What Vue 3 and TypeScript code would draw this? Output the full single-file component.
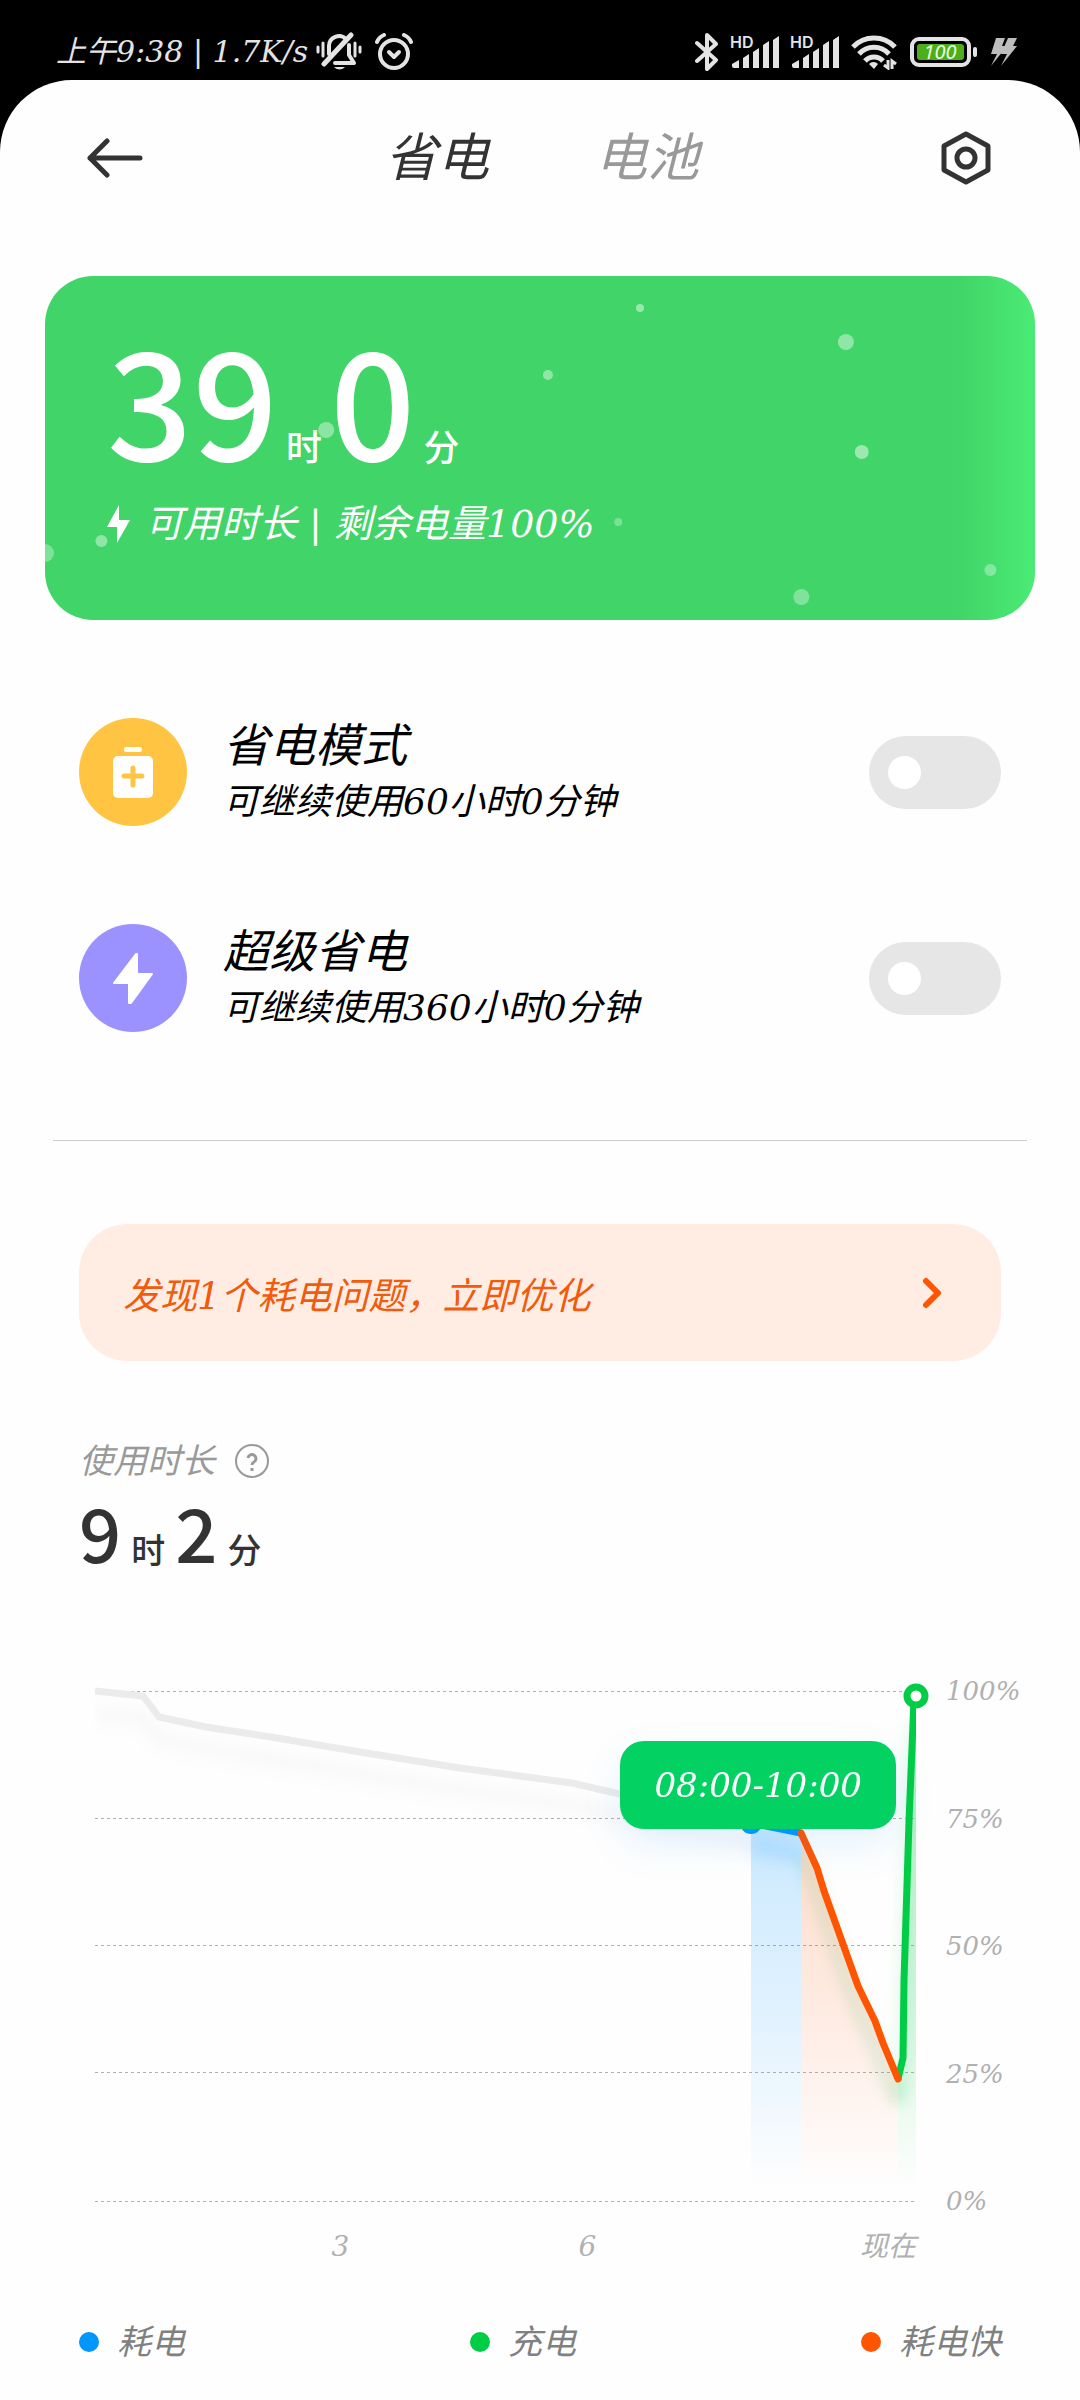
<script setup lang="ts">
import { ref } from 'vue'

interface Mode {
  id: string
  title: string
  detail: string
  color: string
}

interface Bubble {
  x: number
  y: number
  r: number
  o: number
}

const tabs = ['省电', '电池']
const activeTab = ref('省电')

const modes: Mode[] = [
  { id: 'saver', title: '省电模式', detail: '可继续使用60小时0分钟', color: '#ffc542' },
  { id: 'ultra', title: '超级省电', detail: '可继续使用360小时0分钟', color: '#9c92ff' },
]
const enabled = ref<Record<string, boolean>>({ saver: false, ultra: false })

// x is a share of the card's width, y and r are pixels
const bubbles: Bubble[] = [
  { x: 0, y: 277, r: 9, o: 0.32 },
  { x: 5.7, y: 265, r: 6, o: 0.42 },
  { x: 28.4, y: 154, r: 8, o: 0.4 },
  { x: 50.8, y: 99, r: 5, o: 0.42 },
  { x: 57.9, y: 246, r: 4, o: 0.3 },
  { x: 60.1, y: 32, r: 4, o: 0.46 },
  { x: 76.4, y: 321, r: 8, o: 0.34 },
  { x: 80.9, y: 66, r: 8, o: 0.42 },
  { x: 82.5, y: 176, r: 7, o: 0.48 },
  { x: 95.5, y: 294, r: 6, o: 0.34 },
]

const gridLines = [0, 127, 254, 381, 510]
const percents = ['100%', '75%', '50%', '25%', '0%']

const idleLine = '0,0 48,5 64,26 111,36 176,46 265,61 365,77 477,92 525,103 656,132'
const drainLine = '656,132 706,142'
const fastLine = '706,142 722,177 729,200 763,295 780,330 788,352 803,388'
const chargeLine = '803,388 808,367 809,290 814,130 819,8'

const legend = [
  { label: '耗电', color: '#0096ff' },
  { label: '充电', color: '#00cd46' },
  { label: '耗电快', color: '#ff5500' },
]
</script>

<template>
  <div class="phone">
    <header class="status">
      <div class="status-side">
        <span class="clock">上午9:38 | 1.7K/s</span>
        <svg class="mute" width="46" height="40" viewBox="0 0 46 40" fill="none" stroke="#e4e4e4" stroke-linecap="round">
          <path d="M2 15v5M7 11v13M39 11v13M44 15v5" stroke-width="3" />
          <path d="M13 22V14a10 10 0 0 1 17-7M33 13v10l5 8H19" stroke-width="4" stroke-linejoin="round" />
          <path d="M8 32L35 3" stroke-width="5" />
          <path d="M18 35h11a6 4 0 0 1-11 0z" fill="#e4e4e4" stroke="none" />
        </svg>
        <svg class="alarm" width="40" height="38" viewBox="0 0 40 38" fill="none" stroke="#e4e4e4" stroke-linecap="round">
          <circle cx="20" cy="21" r="14" stroke-width="4" />
          <path d="M15 19l5 5 5-5" stroke-width="4" stroke-linejoin="round" />
          <path d="M3 9q2-5 7-7M37 9q-2-5-7-7" stroke-width="4" />
        </svg>
      </div>
      <div class="status-side">
        <svg width="24" height="40" viewBox="0 0 24 40" fill="none" stroke="#e4e4e4" stroke-width="4" stroke-linejoin="round" stroke-linecap="round">
          <path d="M2 11l19 17-9 9V3l9 9L2 29" />
        </svg>
        <svg v-for="n in 2" :key="n" class="signal" width="50" height="34" viewBox="0 0 50 34" fill="#e4e4e4">
          <text x="1" y="13" class="hd">HD</text>
          <path d="M3 31v-2l7-4v8H5a2 2 0 0 1-2-2zM14 33V23l6-4v14zM24 33V17l6-4v20zM34 33V10l6-4v27zM44 33V5l6-4v32z" />
        </svg>
        <svg class="wifi" width="46" height="36" viewBox="0 0 46 36" fill="none" stroke="#e4e4e4" stroke-width="5">
          <path d="M2 13a29 29 0 0 1 42 0M8 20a20 20 0 0 1 30 0M14 27a12 12 0 0 1 18 0" />
          <path d="M18 30a6 6 0 0 1 9 0l-4 5z" fill="#e4e4e4" stroke="none" />
          <path d="M37 26v8l-4-3M41 35v-8l4 3" stroke-width="3" />
        </svg>
        <svg class="battery" width="68" height="30" viewBox="0 0 68 30">
          <rect x="2" y="2" width="57" height="26" rx="7" fill="none" stroke="#e4e4e4" stroke-width="4" />
          <rect x="7" y="7" width="47" height="16" rx="3" fill="#4caf1a" />
          <rect x="63" y="10" width="4" height="10" rx="2" fill="#e4e4e4" />
          <text x="30" y="22" text-anchor="middle" class="level">100</text>
        </svg>
        <svg class="flash" width="28" height="30" viewBox="0 0 28 30" fill="#bdbdbd">
          <path d="M6 1h9l-3 8h5L1 29l6-12H1zM18 1h9l-4 8h4L11 29l6-12h-6z" />
        </svg>
      </div>
    </header>

    <main class="sheet">
      <nav class="topbar">
        <button class="icon-button" type="button" aria-label="返回">
          <svg width="58" height="40" viewBox="0 0 58 40" fill="none" stroke="#333" stroke-width="5" stroke-linecap="round" stroke-linejoin="round">
            <path d="M21 3L4 20l17 17M4 20h50" />
          </svg>
        </button>
        <div class="tabs">
          <button
            v-for="tab in tabs"
            :key="tab"
            type="button"
            class="tab"
            :class="{ active: tab === activeTab }"
            @click="activeTab = tab"
          >{{ tab }}</button>
        </div>
        <button class="icon-button" type="button" aria-label="设置">
          <svg width="52" height="56" viewBox="0 0 52 56" fill="none" stroke="#333" stroke-width="5" stroke-linejoin="round">
            <path d="M26 4L48 16V40L26 52L4 40V16z" />
            <circle cx="26" cy="28" r="9" />
          </svg>
        </button>
      </nav>

      <section class="hero">
        <svg class="bubbles" width="100%" height="100%" aria-hidden="true">
          <circle v-for="(b, i) in bubbles" :key="i" :cx="b.x + '%'" :cy="b.y" :r="b.r" fill="#fff" :opacity="b.o" />
        </svg>
        <p class="hero-time"><b>39</b><span>时</span><b>0</b><span>分</span></p>
        <p class="hero-note">
          <svg width="24" height="38" viewBox="0 0 24 38" fill="#fff"><path d="M12 0L0 22h10v16L23 15H12z" /></svg>
          <span>可用时长 | 剩余电量100%</span>
        </p>
      </section>

      <section class="modes">
        <label v-for="mode in modes" :key="mode.id" class="mode">
          <span class="mode-icon" :style="{ background: mode.color }">
            <svg v-if="mode.id === 'saver'" width="42" height="52" viewBox="0 0 42 52">
              <rect x="12" y="1" width="18" height="5" rx="2" fill="#fff" />
              <rect x="1" y="10" width="40" height="42" rx="5" fill="#fff" />
              <path d="M21 22v17M12 30h18" stroke="#ffc542" stroke-width="5" stroke-linecap="round" />
            </svg>
            <svg v-else width="42" height="52" viewBox="0 0 42 52" fill="#fff" stroke="#fff" stroke-width="2" stroke-linejoin="round">
              <path d="M24 2L2 31h15v20h2L40 22H25V2z" />
            </svg>
          </span>
          <span class="mode-text">
            <span class="mode-title">{{ mode.title }}</span>
            <span class="mode-detail">{{ mode.detail }}</span>
          </span>
          <input v-model="enabled[mode.id]" class="switch" type="checkbox" role="switch" />
        </label>
      </section>

      <hr class="divider" />

      <button class="notice" type="button">
        <span>发现1个耗电问题，立即优化</span>
        <svg width="20" height="32" viewBox="0 0 20 32" fill="none" stroke="#ff5500" stroke-width="6" stroke-linecap="round" stroke-linejoin="round">
          <path d="M4 4l12 12L4 28" />
        </svg>
      </button>

      <section class="usage">
        <div class="usage-label">
          <span>使用时长</span>
          <button class="icon-button" type="button" aria-label="说明">
            <svg width="34" height="34" viewBox="0 0 34 34" fill="none" stroke="#999" stroke-width="2">
              <circle cx="17" cy="17" r="16" />
              <path d="M13 14a4 4 0 1 1 6 4q-2 1-2 3" stroke-width="3" />
              <path d="M17 24v3" stroke-width="3" />
            </svg>
          </button>
        </div>
        <p class="usage-time"><b>9</b><span>时</span><b>2</b><span>分</span></p>
      </section>

      <section class="chart">
        <div class="plot">
          <svg class="graph" viewBox="0 -16 821 542">
            <defs>
              <linearGradient id="drain" x1="0" y1="132" x2="0" y2="500" gradientUnits="userSpaceOnUse">
                <stop offset="0" stop-color="#0096ff" stop-opacity=".2" />
                <stop offset=".5" stop-color="#0096ff" stop-opacity=".12" />
                <stop offset="1" stop-color="#0096ff" stop-opacity="0" />
              </linearGradient>
              <linearGradient id="fast" x1="0" y1="142" x2="0" y2="500" gradientUnits="userSpaceOnUse">
                <stop offset="0" stop-color="#ff5500" stop-opacity=".2" />
                <stop offset=".5" stop-color="#ff5500" stop-opacity=".11" />
                <stop offset="1" stop-color="#ff5500" stop-opacity="0" />
              </linearGradient>
              <linearGradient id="charge" x1="0" y1="8" x2="0" y2="500" gradientUnits="userSpaceOnUse">
                <stop offset="0" stop-color="#00cd46" stop-opacity=".3" />
                <stop offset=".6" stop-color="#00cd46" stop-opacity=".17" />
                <stop offset="1" stop-color="#00cd46" stop-opacity="0" />
              </linearGradient>
              <filter id="soft" x="0" y="-40" width="821" height="560" filterUnits="userSpaceOnUse">
                <feGaussianBlur stdDeviation="7" />
              </filter>
              <clipPath id="area"><rect x="0" y="-16" width="821" height="542" /></clipPath>
            </defs>
            <line v-for="y in gridLines" :key="y" x1="0" x2="821" :y1="y" :y2="y" stroke="#b0b0b0" stroke-width="1" stroke-dasharray="3 3" shape-rendering="crispEdges" />
            <g clip-path="url(#area)">
              <path :d="'M' + drainLine + ' 706,510 656,510z'" fill="url(#drain)" />
              <path :d="'M' + fastLine + ' 803,510 706,510z'" fill="url(#fast)" />
              <path :d="'M' + chargeLine + ' 821,8 821,510 803,510z'" fill="url(#charge)" />
              <g filter="url(#soft)" fill="none" stroke-width="16" transform="translate(0 22)">
                <polyline :points="idleLine" stroke="#999" opacity=".06" />
                <polyline :points="drainLine" stroke="#0096ff" opacity=".12" />
                <polyline :points="fastLine" stroke="#2fae4a" opacity=".16" stroke-width="12" />
                <polyline :points="chargeLine" stroke="#00cd46" opacity=".12" stroke-width="12" />
              </g>
              <g fill="none" stroke-width="7" stroke-linejoin="round">
                <polyline :points="idleLine" stroke="#ebebeb" />
                <polyline :points="drainLine" stroke="#0096ff" />
                <polyline :points="chargeLine" stroke="#00cd46" />
                <polyline :points="fastLine" stroke="#ff5500" stroke-linecap="round" />
              </g>
              <circle cx="656" cy="132" r="11" fill="#0096ff" />
            </g>
            <circle cx="821" cy="5" r="9" fill="#fff" stroke="#00cd46" stroke-width="7" />
          </svg>
          <div class="tip">08:00-10:00</div>
        </div>
        <ul class="percents">
          <li v-for="p in percents" :key="p">{{ p }}</li>
        </ul>
        <div class="hours">
          <span></span><span>3</span><span>6</span><span class="now">现在</span>
        </div>
      </section>

      <ul class="legend">
        <li v-for="item in legend" :key="item.label">
          <i :style="{ background: item.color }"></i>{{ item.label }}
        </li>
      </ul>
    </main>
  </div>
</template>

<style>
body {
  margin: 0;
  background: #000;
}
</style>

<style scoped>
.phone {
  font-family: "DejaVu Serif", "Noto Sans CJK SC", serif;
  font-style: italic;
  color: #000;
  min-height: 100vh;
  display: flex;
  flex-direction: column;
}

p,
ul {
  margin: 0;
  padding: 0;
  list-style: none;
}

svg {
  display: block;
  flex: none;
}

button {
  font: inherit;
  color: inherit;
  background: none;
  border: 0;
  padding: 0;
}

.status {
  display: flex;
  justify-content: space-between;
  height: 56px;
  padding: 24px 62px 0 56px;
  color: #e4e4e4;
}

.status-side {
  display: flex;
  align-items: center;
  height: 56px;
}

.clock {
  font-size: 30px;
  line-height: 40px;
  white-space: nowrap;
}

.mute {
  margin-left: 8px;
}

.alarm {
  margin-left: 12px;
}

.signal {
  margin-left: 10px;
  overflow: visible;
}

.wifi {
  margin-left: 12px;
}

.battery {
  margin-left: 13px;
}

.flash {
  margin-left: 12px;
}

.hd {
  font: 600 16px Inter, sans-serif;
}

.level {
  font: italic 20px "Noto Sans", sans-serif;
  fill: #e8ffe0;
}

.sheet {
  flex: 1;
  background: #fefefe;
  border-radius: 72px 72px 0 0;
}

.topbar {
  display: flex;
  align-items: center;
  justify-content: space-between;
  height: 156px;
  padding: 0 88px 0 86px;
}

.tabs {
  display: flex;
  gap: 106px;
}

.tab {
  font-size: 52px;
  line-height: 64px;
  color: #999;
}

.tab.active {
  color: #333;
}

.hero {
  position: relative;
  margin: 40px 45px 0;
  padding: 40px 62px 66px;
  border-radius: 48px;
  overflow: hidden;
  color: #fff;
  background: linear-gradient(to right, #41d468 calc(100% - 80px), #4aeb74);
}

.bubbles {
  position: absolute;
  inset: 0;
}

.hero-time,
.usage-time {
  display: flex;
  align-items: baseline;
  font-family: "Noto Sans CJK SC", sans-serif;
  font-style: normal;
  font-weight: 500;
}

.hero-time b,
.usage-time b {
  font-weight: 500;
}

.hero-time span,
.usage-time span {
  line-height: 40px;
}

.hero-time {
  font-size: 36px;
  line-height: 160px;
}

.hero-time b {
  font-size: 150px;
}

.hero-time span {
  margin: 0 8px;
}

.hero-note {
  display: flex;
  align-items: center;
  gap: 14px;
  font-size: 38px;
  line-height: 60px;
  margin-top: 18px;
  white-space: nowrap;
}

.modes {
  display: grid;
  gap: 98px;
  margin: 98px 79px 0;
}

.mode {
  display: flex;
  align-items: center;
  height: 108px;
}

.mode-icon {
  width: 108px;
  height: 108px;
  border-radius: 50%;
  display: grid;
  place-items: center;
}

.mode-text {
  flex: 1;
  margin-left: 36px;
  display: grid;
}

.mode-title {
  font-size: 46px;
  line-height: 60px;
}

.mode-detail {
  font-size: 36px;
  line-height: 52px;
}

.switch {
  appearance: none;
  width: 132px;
  height: 73px;
  margin: 0;
  border-radius: 37px;
  background: #e6e6e6;
  display: flex;
  align-items: center;
  padding: 0 19px;
}

.switch::before {
  content: "";
  width: 33px;
  height: 33px;
  border-radius: 50%;
  background: #fff;
}

.switch:checked {
  background: #42d46a;
  justify-content: flex-end;
}

.divider {
  height: 1px;
  margin: 108px 53px 0;
  border: 0;
  background: #ccc;
}

.notice {
  display: flex;
  align-items: center;
  justify-content: space-between;
  box-sizing: border-box;
  width: calc(100% - 158px);
  height: 137px;
  margin: 83px 79px 0;
  padding: 0 59px 0 44px;
  border-radius: 48px;
  background: #ffede4;
  color: #f25a0c;
  font-size: 37px;
}

.usage {
  margin: 78px 79px 0;
}

.usage-label {
  display: flex;
  align-items: center;
  gap: 20px;
  font-size: 34px;
  line-height: 44px;
  color: #999;
}

.usage-time {
  font-size: 34px;
  line-height: 80px;
  margin-top: 8px;
  color: #333;
}

.usage-time b {
  font-size: 74px;
}

.usage-time span {
  margin: 0 10px;
}

.chart {
  display: grid;
  grid-template-columns: 1fr 134px;
  column-gap: 30px;
  margin: 104px 0 0 95px;
}

.plot {
  position: relative;
}

.graph {
  width: 100%;
  overflow: visible;
}

.tip {
  position: absolute;
  left: 64%;
  top: 66px;
  padding: 0 34px;
  border-radius: 24px;
  background: #03d162;
  color: #fff;
  font-size: 34px;
  line-height: 88px;
  white-space: nowrap;
  box-shadow: 0 16px 40px rgba(0, 150, 255, 0.1);
}

.percents {
  display: flex;
  flex-direction: column;
  justify-content: space-between;
  font-size: 26px;
  line-height: 32px;
  color: #b0b0b0;
}

.hours {
  display: grid;
  grid-template-columns: 122fr 247fr 247fr 205fr;
  margin-top: 10px;
  font-size: 28px;
  line-height: 40px;
  text-align: center;
  color: #b0b0b0;
}

.hours .now {
  text-align: right;
}

.legend {
  display: flex;
  justify-content: space-between;
  margin: 50px 79px 0;
  padding-bottom: 30px;
  font-size: 34px;
  line-height: 50px;
  color: #808080;
}

.legend li {
  display: flex;
  align-items: center;
  gap: 18px;
}

.legend i {
  width: 20px;
  height: 20px;
  border-radius: 50%;
}
</style>
